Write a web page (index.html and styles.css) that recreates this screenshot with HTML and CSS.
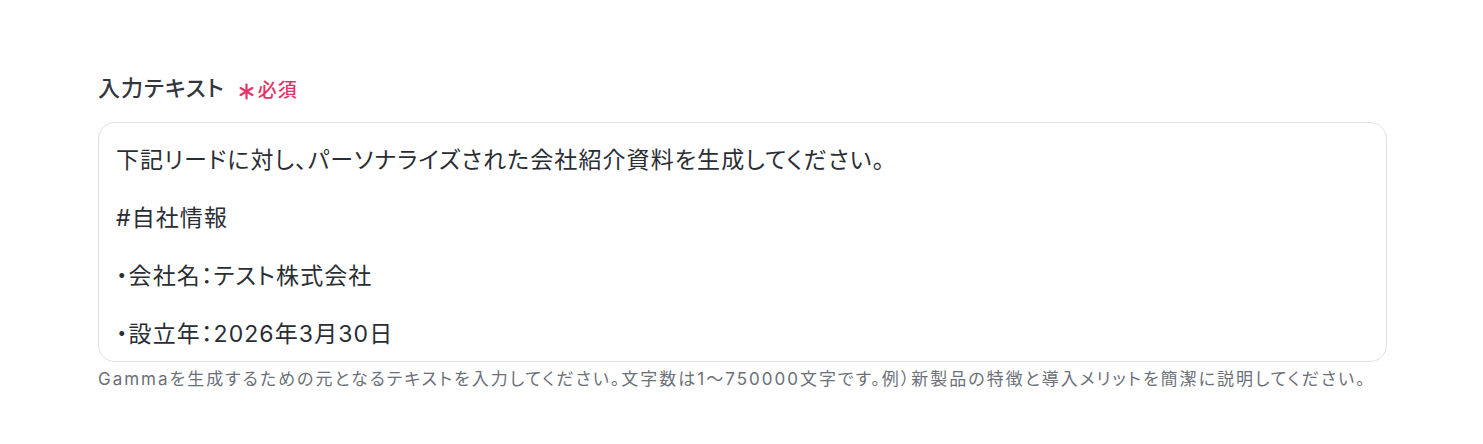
FILE: index.html
```html
<!DOCTYPE html>
<html lang="ja">
<head>
    <meta charset="UTF-8">
    <meta name="viewport" content="width=device-width, initial-scale=1.0">
    <title>入力テキスト</title>
    <link rel="stylesheet" href="styles.css">
</head>
<body>
    <div class="field">
        <label class="field-label">入力テキスト
            <span class="required">
                <svg class="star" width="17" height="17" viewBox="0 0 16 16" aria-hidden="true">
                    <g stroke="currentColor" stroke-width="2.1" stroke-linecap="round">
                        <line x1="8" y1="1.5" x2="8" y2="14.5"/>
                        <line x1="2.4" y1="4.75" x2="13.6" y2="11.25"/>
                        <line x1="2.4" y1="11.25" x2="13.6" y2="4.75"/>
                    </g>
                </svg>必須
            </span>
        </label>
        <div class="text-box">
            <p>下記リードに対し、パーソナライズされた会社紹介資料を生成してください。</p>
            <p>#自社情報</p>
            <p>・会社名：テスト株式会社</p>
            <p>・設立年：2026年3月30日</p>
        </div>
        <p class="hint">Gammaを生成するための元となるテキストを入力してください。文字数は1〜750000文字です。例）新製品の特徴と導入メリットを簡潔に説明してください。</p>
    </div>
</body>
</html>
```

FILE: styles.css
```css
body {
    margin: 0;
    font-family: Inter, "Noto Sans CJK JP", sans-serif;
    font-feature-settings: "palt";
    color: #2a2e34;
    background: #fff;
}
.field {
    padding: 74px 96px 0 98px;
}
.field-label {
    display: flex;
    align-items: center;
    height: 28px;
    font-size: 22px;
    font-weight: 500;
    letter-spacing: 1px;
    line-height: 28px;
    color: #33373d;
}
.required {
    display: flex;
    align-items: center;
    gap: 3px;
    margin: 6px 0 0 13px;
    color: #e5336a;
    font-size: 19px;
    font-weight: 500;
    letter-spacing: 1px;
}
.text-box {
    margin-top: 20px;
    height: 240px;
    box-sizing: border-box;
    border: 1px solid #dde1e7;
    border-radius: 17px;
    padding: 23px 17px 0;
    overflow: hidden;
    font-size: 23px;
    letter-spacing: 1.1px;
}
.text-box p {
    margin: 0 0 29px;
    line-height: 29px;
}
.text-box p:last-child {
    margin-bottom: 0;
}
.hint {
    margin: 5px 0 0;
    font-size: 17px;
    line-height: 24px;
    letter-spacing: 2px;
    color: #6b7079;
}
```
